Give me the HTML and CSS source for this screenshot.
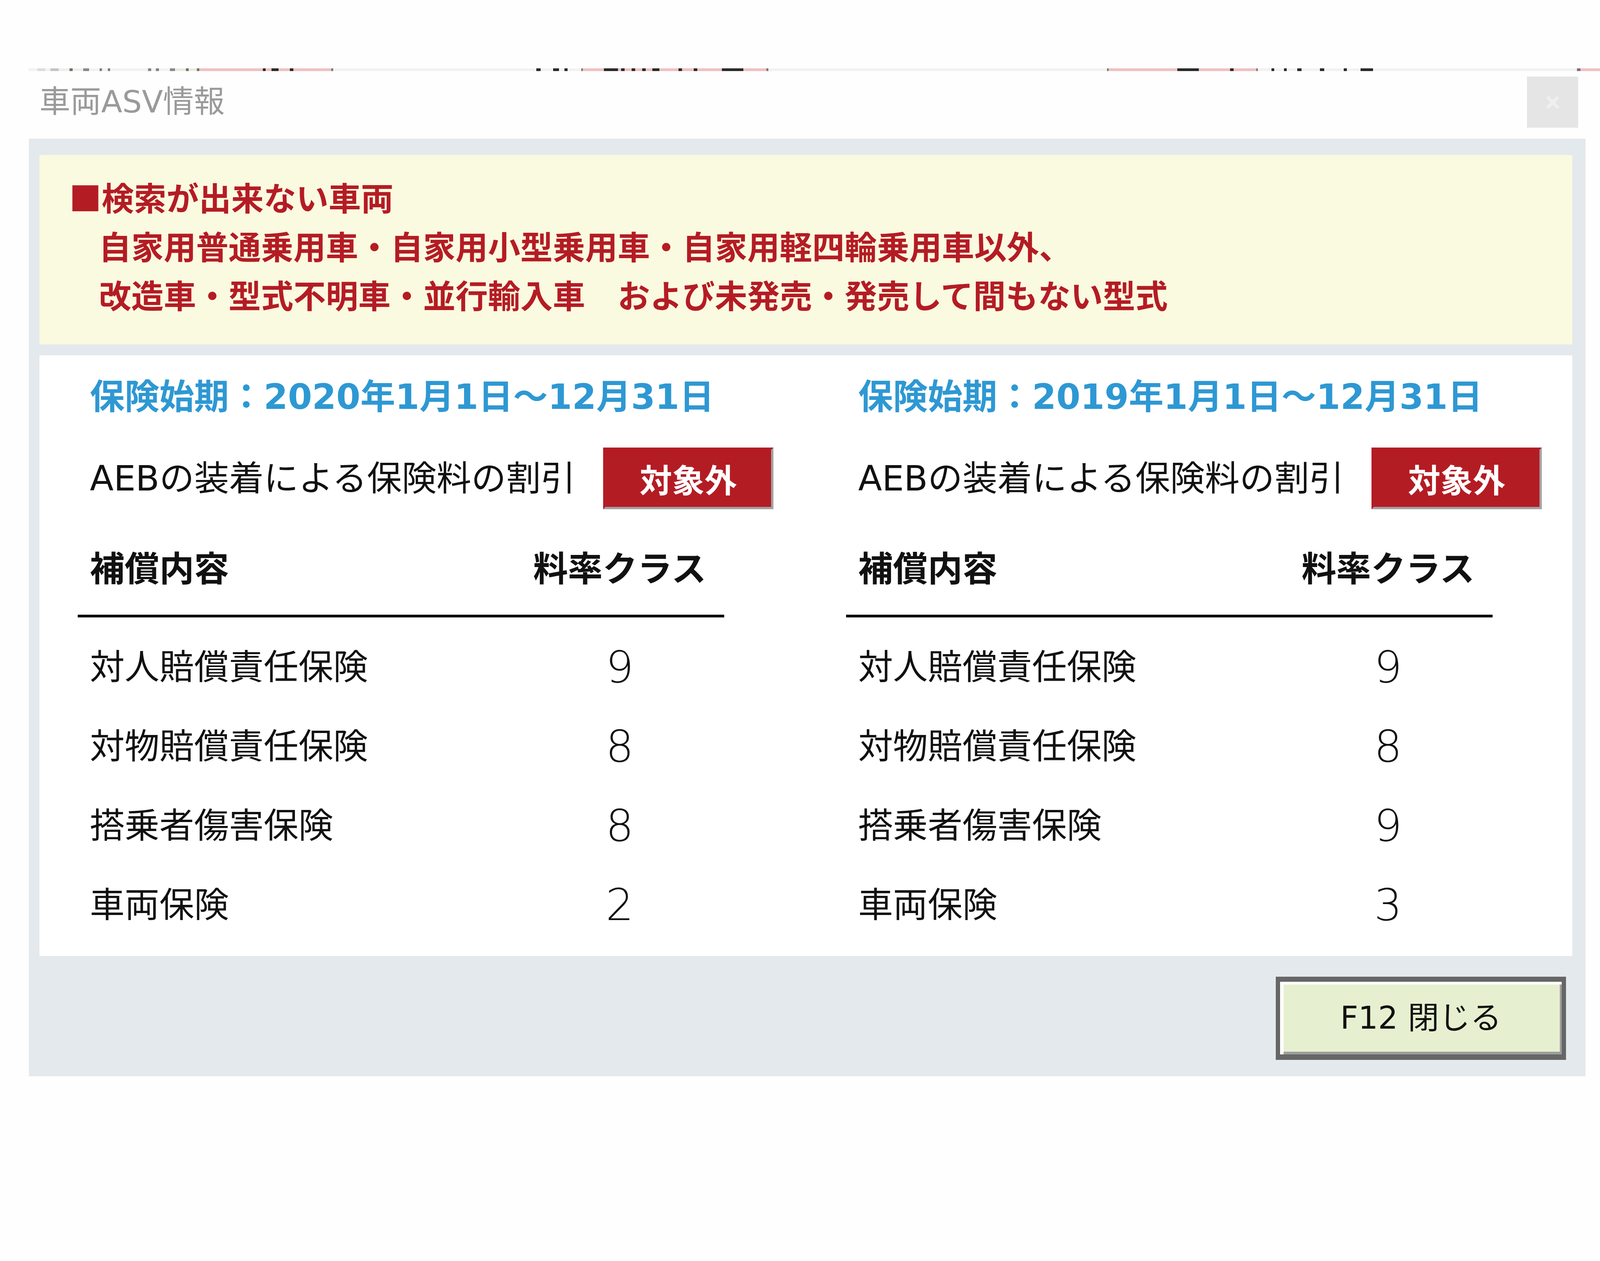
FILE: index.html
```html
<!DOCTYPE html>
<html lang="ja">
<head>
  <meta charset="UTF-8">
  <title>車両ASV情報</title>
  <link rel="stylesheet" href="styles.css">
</head>
<body>
  <div class="screen">
    <!-- bottom edge of the row behind the dialog -->
    <div class="cutoff-row"></div>

    <div class="titlebar">
      <div class="title">車両ASV情報</div>
      <div class="close-box">
        <svg width="36" height="36" viewBox="0 0 36 36">
          <path d="M4 4 L32 32 M32 4 L4 32" stroke="#efefef" stroke-width="8" fill="none"/>
        </svg>
      </div>
    </div>

    <div class="dialog">
      <div class="notice">
        <div>■検索が出来ない車両</div>
        <div class="notice-line">自家用普通乗用車・自家用小型乗用車・自家用軽四輪乗用車以外、</div>
        <div class="notice-line">改造車・型式不明車・並行輸入車　および未発売・発売して間もない型式</div>
      </div>

      <div class="rates">
        <!-- 2020 -->
        <div class="period">
          <div class="period-title">保険始期：2020年1月1日～12月31日</div>
          <div class="aeb-row">
            <div class="aeb-label">AEBの装着による保険料の割引</div>
            <div class="badge">対象外</div>
          </div>
          <div class="rate-table">
            <div class="rate-head">
              <div class="cell-name">補償内容</div>
              <div class="cell-class">料率クラス</div>
            </div>
            <div class="rate-body">
              <div class="rate-row">
                <div class="cell-name">対人賠償責任保険</div>
                <div class="cell-class rate-num">9</div>
              </div>
              <div class="rate-row">
                <div class="cell-name">対物賠償責任保険</div>
                <div class="cell-class rate-num">8</div>
              </div>
              <div class="rate-row">
                <div class="cell-name">搭乗者傷害保険</div>
                <div class="cell-class rate-num">8</div>
              </div>
              <div class="rate-row">
                <div class="cell-name">車両保険</div>
                <div class="cell-class rate-num">2</div>
              </div>
            </div>
          </div>
        </div>

        <!-- 2019 -->
        <div class="period">
          <div class="period-title">保険始期：2019年1月1日～12月31日</div>
          <div class="aeb-row">
            <div class="aeb-label">AEBの装着による保険料の割引</div>
            <div class="badge">対象外</div>
          </div>
          <div class="rate-table">
            <div class="rate-head">
              <div class="cell-name">補償内容</div>
              <div class="cell-class">料率クラス</div>
            </div>
            <div class="rate-body">
              <div class="rate-row">
                <div class="cell-name">対人賠償責任保険</div>
                <div class="cell-class rate-num">9</div>
              </div>
              <div class="rate-row">
                <div class="cell-name">対物賠償責任保険</div>
                <div class="cell-class rate-num">8</div>
              </div>
              <div class="rate-row">
                <div class="cell-name">搭乗者傷害保険</div>
                <div class="cell-class rate-num">9</div>
              </div>
              <div class="rate-row">
                <div class="cell-name">車両保険</div>
                <div class="cell-class rate-num">3</div>
              </div>
            </div>
          </div>
        </div>
      </div>

      <div class="dialog-footer">
        <button class="close-button">F12 閉じる</button>
      </div>
    </div>
  </div>
</body>
</html>
```

FILE: styles.css
```css
body {
  margin: 0;
  background: #fefefe;
  font-family: "DejaVu Sans", "Noto Sans CJK JP", sans-serif;
  color: #111;
}

.screen {
  padding-top: 175px;
}

.cutoff-row {
  margin-left: 73px;
  height: 7px;
  background: linear-gradient(to right,
    #f2f2f2 0 23px, #dcdcdc 23px 43px, #f2f2f2 43px 56px, #c4c4c4 56px 77px,
    #eef0e8 77px 105px, #707070 105px 113px, #eef0e8 113px 140px, #8a8a8a 140px 155px,
    #f2f2f2 155px 182px, #808080 182px 188px, #f2f2f2 188px 203px, #808080 203px 209px,
    #f2f2f2 209px 306px, #858585 306px 314px, #f2f2f2 314px 326px, #858585 326px 334px,
    #f2f2f2 334px 362px, #8a8a8a 362px 375px, #e8ebe0 375px 403px, #707070 403px 410px,
    #e8ebe0 410px 431px, #707070 431px 437px,
    #f0c0c2 437px 600px, #2a2a2a 600px 607px, #f0c0c2 607px 622px, #2a2a2a 622px 640px,
    #f0c0c2 640px 669px, #2a2a2a 669px 678px, #f0c0c2 678px 775px, #7a7a7a 775px 780px,
    #f2f2f2 780px 1300px, #2a2a2a 1300px 1311px, #f2f2f2 1311px 1343px, #2a2a2a 1343px 1358px,
    #f2f2f2 1358px 1372px, #2a2a2a 1372px 1380px, #f2f2f2 1380px 1415px, #7a7a7a 1415px 1419px,
    #f0c0c2 1419px 1473px, #2a2a2a 1473px 1509px, #f0c0c2 1509px 1517px, #2a2a2a 1517px 1526px,
    #f0c0c2 1526px 1544px, #2a2a2a 1544px 1553px, #f0c0c2 1553px 1571px, #2a2a2a 1571px 1580px,
    #f0c0c2 1580px 1597px, #2a2a2a 1597px 1615px, #f0c0c2 1615px 1664px, #2a2a2a 1664px 1673px,
    #f0c0c2 1673px 1703px, #2a2a2a 1703px 1712px, #f0c0c2 1712px 1775px, #2a2a2a 1775px 1830px,
    #f0c0c2 1830px 1889px, #7a7a7a 1889px 1894px,
    #f2f2f2 1894px 2761px, #7a7a7a 2761px 2765px,
    #f0c0c2 2765px 2941px, #2a2a2a 2941px 2996px, #f0c0c2 2996px 3076px, #2a2a2a 3076px 3085px,
    #f0c0c2 3085px 3143px, #7a7a7a 3143px 3147px,
    #f2f2f2 3147px 3182px, #2a2a2a 3182px 3189px, #f2f2f2 3189px 3214px, #2a2a2a 3214px 3221px,
    #f2f2f2 3221px 3248px, #2a2a2a 3248px 3259px, #f2f2f2 3259px 3306px, #2a2a2a 3306px 3317px,
    #f2f2f2 3317px 3367px, #2a2a2a 3367px 3375px, #f2f2f2 3375px 3410px, #2a2a2a 3410px 3442px,
    #f2f2f2 3442px 3964px, #777 3964px 3973px, #f0c0c2 3973px 4035px);
}

.titlebar {
  display: flex;
  justify-content: space-between;
  align-items: center;
  padding: 14px 56px 28px 101px;
}

.title {
  font-size: 79px;
  line-height: 1;
  color: #9a9a9a;
}

.close-box {
  width: 131px;
  height: 131px;
  background: #e5e5e5;
  display: flex;
  align-items: center;
  justify-content: center;
}

.dialog {
  margin-left: 74px;
  width: 3985px;
  padding: 42px 34px 42px 27px;
  box-sizing: border-box;
  background: #e4e9ed;
}

.notice {
  height: 485px;
  box-sizing: border-box;
  padding: 44px 0 0 76px;
  background: #fafae0;
  font-family: "Noto Sans CJK JP", sans-serif;
  font-size: 83px;
  font-weight: bold;
  line-height: 125px;
  color: #b41c24;
  white-space: nowrap;
}

.notice-line {
  padding-left: 76px;
}

.rates {
  margin-top: 28px;
  height: 1538px;
  box-sizing: border-box;
  padding-left: 98px;
  background: #fff;
  display: grid;
  grid-template-columns: 1967px 1967px;
}

.period-title {
  margin-top: 47px;
  padding-left: 31px;
  font-size: 89px;
  font-weight: bold;
  line-height: 118px;
  color: #2e98d3;
  white-space: nowrap;
}

.aeb-row {
  margin-top: 71px;
  padding-left: 31px;
  height: 158px;
  display: grid;
  grid-template-columns: 1314px 436px;
  align-items: center;
}

.aeb-label {
  font-size: 89px;
  line-height: 118px;
  white-space: nowrap;
}

.badge {
  height: 158px;
  box-sizing: border-box;
  border: 6px solid;
  border-color: #b41c24 #a3a3a3 #a3a3a3 #b41c24;
  background: #b41c24;
  color: #fff;
  font-size: 83px;
  font-weight: bold;
  display: flex;
  align-items: center;
  justify-content: center;
}

.rate-table {
  width: 1655px;
  margin-top: 94px;
}

.rate-head {
  display: grid;
  grid-template-columns: 1160px 455px;
  font-size: 89px;
  font-weight: bold;
  line-height: 118px;
  padding-bottom: 58px;
  border-bottom: 7px solid #000;
  white-space: nowrap;
}

.rate-body {
  padding-top: 25px;
}

.rate-row {
  display: grid;
  grid-template-columns: 1160px 455px;
  height: 203px;
  align-items: center;
  font-size: 89px;
  line-height: 118px;
  white-space: nowrap;
}

.cell-name {
  padding-left: 31px;
}

.cell-class {
  text-align: center;
}

.rate-num {
  font-size: 113px;
  font-weight: 300;
  line-height: 136px;
}

.dialog-footer {
  margin-top: 53px;
  padding-right: 16px;
  display: flex;
  justify-content: flex-end;
}

.close-button {
  width: 743px;
  height: 213px;
  box-sizing: border-box;
  padding: 0 0 16px 0;
  border-style: solid;
  border-color: #666;
  border-width: 13px 11px 14px 11px;
  box-shadow: inset 9px 7px 0 #fff, inset -5px -7px 0 #9e9e9e;
  background: #e6f0d0;
  font-family: inherit;
  font-size: 80px;
  color: #111;
  cursor: pointer;
}
```
